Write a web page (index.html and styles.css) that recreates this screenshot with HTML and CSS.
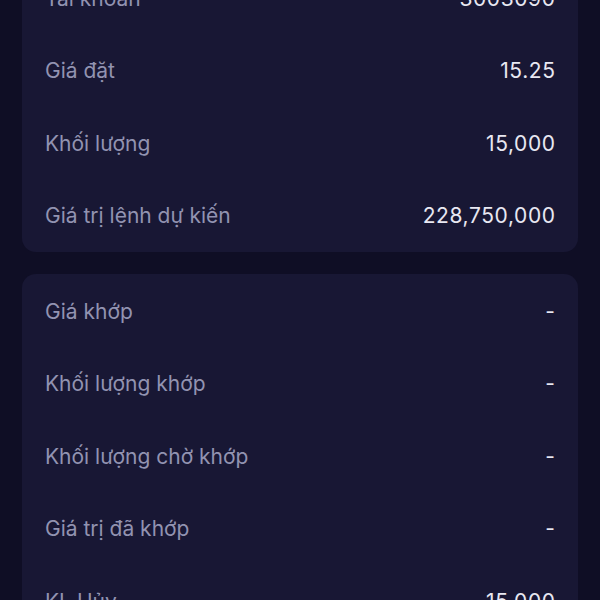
FILE: index.html
```html
<!DOCTYPE html>
<html lang="vi">
<head>
<meta charset="utf-8">
<link rel="stylesheet" href="styles.css">
</head>
<body>
<div class="page">
  <section class="card card-first">
    <div class="row"><span class="label">Tài khoản</span><span class="value">3003090</span></div>
    <div class="row"><span class="label">Giá đặt</span><span class="value">15.25</span></div>
    <div class="row"><span class="label">Khối lượng</span><span class="value">15,000</span></div>
    <div class="row"><span class="label">Giá trị lệnh dự kiến</span><span class="value">228,750,000</span></div>
  </section>
  <section class="card card-second">
    <div class="row"><span class="label">Giá khớp</span><span class="value">-</span></div>
    <div class="row"><span class="label">Khối lượng khớp</span><span class="value">-</span></div>
    <div class="row"><span class="label">Khối lượng chờ khớp</span><span class="value">-</span></div>
    <div class="row"><span class="label">Giá trị đã khớp</span><span class="value">-</span></div>
    <div class="row"><span class="label">KL Hủy</span><span class="value">15,000</span></div>
  </section>
</div>
</body>
</html>
```
FILE: styles.css
```css
html, body {
  margin: 0;
  padding: 0;
  height: 100%;
  overflow: hidden;
  background: #0f0e25;
  font-family: Inter, "Noto Sans", sans-serif;
}
.page {
  display: flex;
  flex-direction: column;
  gap: 22px;
  padding: 0 22px;
  margin-top: -38px;
}
.card {
  background: #181734;
  border-radius: 14px;
  padding: 0 23px;
  display: flex;
  flex-direction: column;
}
.card-second {
  padding-top: 1px;
}
.row {
  height: 72.5px;
  display: flex;
  align-items: center;
  justify-content: space-between;
  font-size: 21px;
  flex-shrink: 0;
}
.label {
  color: #9293b1;
}
.value {
  color: #e8e8f2;
  letter-spacing: 0.6px;
  margin-right: -0.6px;
}
```
